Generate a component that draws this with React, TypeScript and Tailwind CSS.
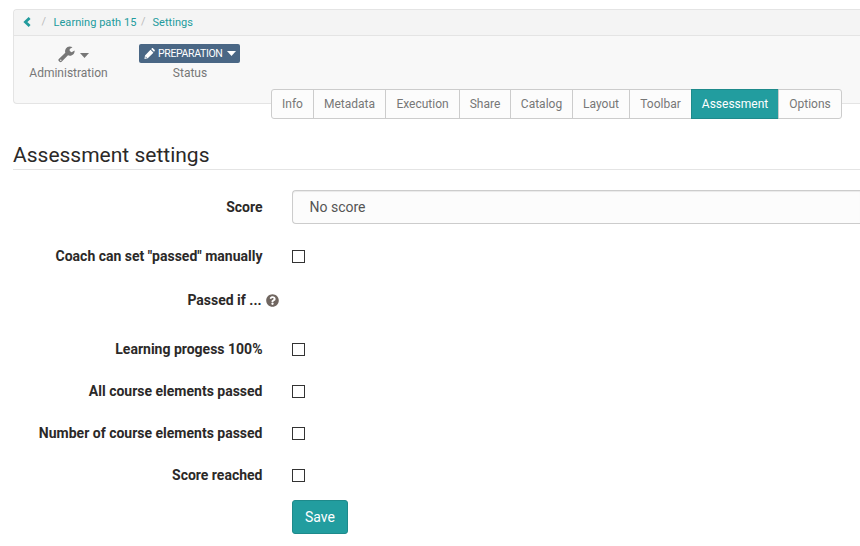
import { FaQuestionCircle } from "react-icons/fa";

const tabs = [
  { label: "Info", width: "w-[43px]" },
  { label: "Metadata", width: "w-[73px]" },
  { label: "Execution", width: "w-[75px]" },
  { label: "Share", width: "w-[52px]" },
  { label: "Catalog", width: "w-[63px]" },
  { label: "Layout", width: "w-[58px]" },
  { label: "Toolbar", width: "w-[63px]" },
  { label: "Assessment", width: "w-[88px]", active: true },
  { label: "Options", width: "w-[64px]" },
];

const passRules = [
  "Learning progess 100%",
  "All course elements passed",
  "Number of course elements passed",
  "Score reached",
];

function ChevronIcon() {
  return (
    <svg viewBox="0 0 8 10" className="mb-px ml-[9px] h-[10px] w-[8px]" fill="none" stroke="currentColor" strokeWidth="2.8">
      <path d="M6.6 1 2.4 5l4.2 4" />
    </svg>
  );
}

function WrenchIcon() {
  return (
    <svg viewBox="0 0 17 17" className="h-[17px] w-[17px]" fill="currentColor">
      <path d="M.8 13.1 7.3 6.7C6.4 3.6 8.6.6 11.6.5c1.1 0 2 .2 2.9.7L11.7 3v2.1l1.9 1.1 3-1.8c.3 2.8-1.9 5.3-4.7 5.3-.8 0-1.3-.2-1.9-.4l-6.4 6.5c-.7.6-1.5.5-2.1-.1l-.7-.7c-.6-.6-.6-1.3 0-1.9Zm2 .4a.7.7 0 1 0 0 1.4.7.7 0 0 0 0-1.4Z" fillRule="evenodd" />
    </svg>
  );
}

function PencilIcon() {
  return (
    <svg viewBox="0 0 12 12" className="mb-px h-[11px] w-[11px]" fill="currentColor">
      <path d="m7.1 1.9 3.2 3.2-6.2 6.2L.5 12l.6-3.9 6-6.2ZM2 8.9l-.3 1.6.5.4.9-.3L2 8.9Zm5.8-7.7.7-.7c.5-.5 1-.5 1.5 0L11.5 2c.5.5.5 1.1 0 1.5l-.6.7-3.1-3Z" fillRule="evenodd" />
    </svg>
  );
}

function CheckRow({ label }: { label: string }) {
  return (
    <label className="flex h-[34px]">
      <span className="w-[262.5px] text-right font-bold leading-[34px]">{label}</span>
      <input
        type="checkbox"
        className="ml-[29.5px] mt-[11px] h-[13px] w-[13px] appearance-none border border-[#333] bg-white"
      />
    </label>
  );
}

export default function App() {
  return (
    <div className="h-[546px] w-[860px] overflow-hidden bg-white pt-[9px] font-['Roboto',sans-serif] text-[14px] text-[#2b2928]">
      <header className="ml-[13px] h-[95px] rounded-l border border-r-0 border-[#e4e4e4] bg-[#f8f8f8] text-[12px]">
        <nav className="flex h-[26px] items-center rounded-tl border-b border-[#e4e4e4] bg-[#f4f4f4] text-[11px] text-[#229b9d]">
          <ChevronIcon />
          <span className="ml-[10.5px] w-[12px] text-[#bbb]">/</span>
          <a className="mt-px w-[82.5px] whitespace-nowrap tracking-[0.05px]">Learning path 15</a>
          <span className="ml-[5px] w-[11.5px] text-[#bbb]">/</span>
          <a className="mt-px tracking-[0.05px]">Settings</a>
        </nav>
        <div className="flex text-[#777]">
          <div className="ml-[9px] flex w-[91px] flex-col items-center pt-[8px]">
            <div className="ml-[9px] flex h-[20px] items-center gap-[5px]">
              <WrenchIcon />
              <svg viewBox="0 0 9 5" className="mt-[2px] h-[5px] w-[9px]" fill="currentColor"><path d="M0 0h9L4.5 5Z" /></svg>
            </div>
            <span className="leading-[18px]">Administration</span>
          </div>
          <div className="ml-[25px] flex w-[102px] flex-col items-start pt-[8px]">
            <div className="flex h-[19px] w-[101px] items-center rounded-[2px] bg-[#4a6785] pl-[5px] text-[10.5px] text-white">
              <PencilIcon />
              <span className="ml-[3px] w-[64px] whitespace-nowrap tracking-[-0.35px]">PREPARATION</span>
              <svg viewBox="0 0 9 5" className="ml-[5px] h-[5px] w-[9px]" fill="currentColor"><path d="M0 0h9L4.5 5Z" /></svg>
            </div>
            <span className="mt-px self-center leading-[18px]">Status</span>
          </div>
        </div>
      </header>

      <div className="relative -mt-[15px] ml-[271px] flex h-[30px] text-[12px] text-[#777]">
        {tabs.map((tab) => (
          <button
            key={tab.label}
            className={`${tab.width} -mr-px shrink-0 border first:rounded-l-[3px] last:rounded-r-[3px] ${
              tab.active ? "border-[#1e8a8b] bg-[#229d9f] text-white" : "border-[#ccc] bg-[#fcfcfc]"
            }`}
          >
            {tab.label}
          </button>
        ))}
      </div>

      <h1 className="ml-[13px] mt-[23px] h-[28px] border-b border-[#e4e4e4] text-[21px] leading-[26px]">
        Assessment settings
      </h1>

      <form className="mt-[20px]">
        <div className="flex h-[34px] items-center">
          <span className="w-[262.5px] text-right font-bold">Score</span>
          <div className="ml-[29.5px] flex h-[34px] flex-1 items-center rounded-l border border-r-0 border-[#ccc] bg-[#fcfcfc] pl-[16.5px] text-[#555] shadow-[inset_0_1px_1px_rgba(0,0,0,0.075)]">
            No score
          </div>
        </div>
        <div className="mt-[15px]">
          <CheckRow label={'Coach can set "passed" manually'} />
        </div>
        <div className="mt-[10px] flex h-[34px] items-center">
          <span className="w-[261.5px] text-right font-bold">Passed if ...</span>
          <FaQuestionCircle className="ml-[4.5px] h-[13px] w-[13px] text-[#706660]" />
        </div>
        <div className="mt-[15px] flex flex-col gap-[8px]">
          {passRules.map((rule) => (
            <CheckRow key={rule} label={rule} />
          ))}
        </div>
        <button
          type="button"
          className="ml-[292px] mt-[8px] h-[34px] w-[56px] rounded-[3px] border border-[#1e8a8b] bg-[#229d9f] text-white"
        >
          Save
        </button>
      </form>
    </div>
  );
}
